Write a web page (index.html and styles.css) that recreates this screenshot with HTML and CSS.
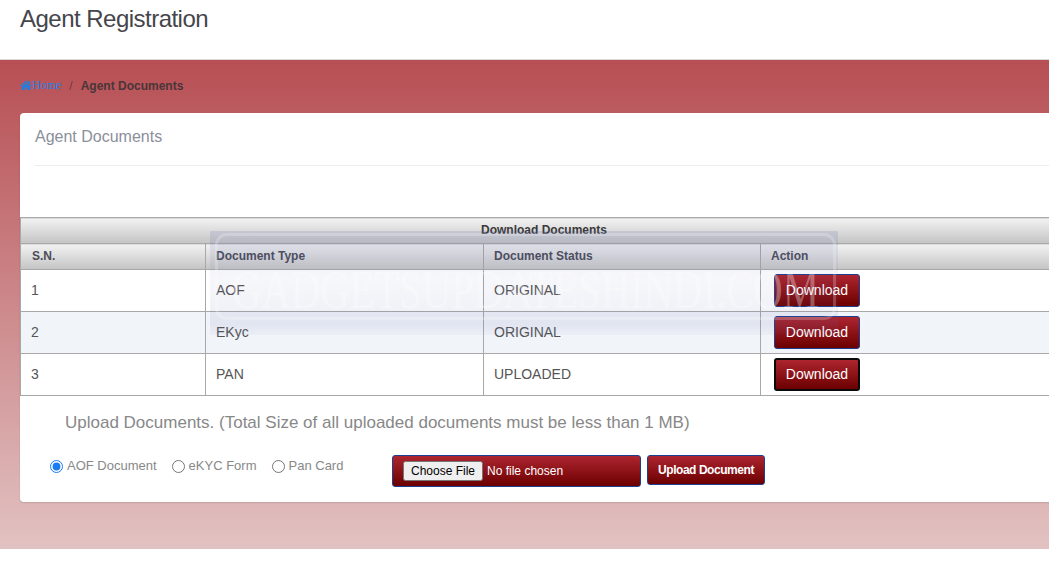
FILE: index.html
```html
<!DOCTYPE html>
<html lang="en">
<head>
<meta charset="utf-8">
<title>Agent Documents</title>
<link rel="stylesheet" href="styles.css">
</head>
<body>
<header class="page-header"><h1>Agent Registration</h1></header>
<main class="content">
  <nav class="crumbs">
    <a class="home" href="#"><svg class="home-icon" viewBox="0 0 24 20" aria-hidden="true"><path d="M12 1 0 11.5l1.4 1.5L12 4l10.600 9 1.400-1.500L20 8V2h-3v3.400z"/><path d="M12 5.800 3.500 13v7H10v-5h4v5h6.500v-7z"/></svg>Home</a>
    <span class="sep">/</span>
    <span class="current">Agent Documents</span>
  </nav>
  <section class="card">
    <h2 class="card-title">Agent Documents</h2>
    <div class="rule"></div>
    <table class="docs">
      <colgroup><col class="c1"><col class="c2"><col class="c3"><col class="c4"></colgroup>
      <thead>
        <tr><th colspan="4" class="caption">Download Documents</th></tr>
        <tr><th>S.N.</th><th>Document Type</th><th>Document Status</th><th>Action</th></tr>
      </thead>
      <tbody>
        <tr><td>1</td><td>AOF</td><td>ORIGINAL</td><td class="act"><button class="btn">Download</button></td></tr>
        <tr class="alt"><td>2</td><td>EKyc</td><td>ORIGINAL</td><td class="act"><button class="btn">Download</button></td></tr>
        <tr><td>3</td><td>PAN</td><td>UPLOADED</td><td class="act"><button class="btn focused">Download</button></td></tr>
      </tbody>
    </table>
    <p class="note">Upload Documents. (Total Size of all uploaded documents must be less than 1 MB)</p>
    <form class="upload">
      <div class="radios">
        <label><input type="radio" name="doc" checked>AOF Document</label>
        <label><input type="radio" name="doc">eKYC Form</label>
        <label><input type="radio" name="doc">Pan Card</label>
      </div>
      <input class="file" type="file">
      <button class="send" type="button">Upload Document</button>
    </form>
  </section>
  <div class="watermark"><div class="frame"><span>GADGETSUPDATESHINDI.COM</span></div></div>
</main>
</body>
</html>
```
FILE: styles.css
```css
* { box-sizing: border-box; }
html, body { margin: 0; height: 567px; overflow: hidden; background: #fff; }
body { font-family: "Liberation Sans", Arial, sans-serif; color: #555; }

.page-header { height: 60px; padding: 5px 20px 0; border-bottom: 1px solid #d8d8d8; }
.page-header h1 { margin: 0; font-size: 24px; line-height: 27px; font-weight: 400; letter-spacing: -0.52px; color: #45454c; }

.content { position: relative; height: 489px; padding: 0 0 0 20px; background: linear-gradient(#b74f54, #e2c2c2); }

.crumbs { height: 53px; padding-top: 18px; font-size: 12px; line-height: 14px; display: flex; align-items: baseline; }
.home { color: #1f7fe0; text-decoration: none; font-family: "Liberation Serif", serif; font-size: 12px; display: inline-flex; align-items: center; }
.home-icon { width: 12px; height: 10px; fill: #1f7fe0; }
.sep { margin: 0 8px 0 8px; color: #6d3a3d; }
.current { font-weight: 700; color: #4a3538; }

.card { width: 1060px; height: 389px; background: #fff; border-radius: 4px 0 0 4px; box-shadow: 0 1px 2px rgba(0,0,0,.12); }
.card-title { margin: 0; padding: 15px 0 0 15px; height: 52px; font-size: 16px; line-height: 18px; font-weight: 400; color: #8b8f9b; }
.rule { margin-left: 15px; border-top: 1px solid #ececec; height: 52px; }

.docs { width: 1060px; table-layout: fixed; border-collapse: collapse; font-size: 14px; color: #555; }
.c1 { width: 185px; }
.c2 { width: 278px; }
.c3 { width: 277px; }
.docs th { height: 26px; padding: 0 10px 2px; text-align: left; font-size: 12px; font-weight: 700; color: #4b4b58; border: 1px solid #a8a8a8; background: linear-gradient(#f2f2f2, #c4c4c4); }
.docs th:first-child { padding-left: 11px; }
.docs th.caption { text-align: center; padding: 0 12px 2px 0; color: #3a3a3a; }
.docs td { height: 42px; padding: 0 10px 2px; border: 1px solid #a8a8a8; }
.docs .alt td { background: #f1f4f9; }
.docs td.act { padding: 0 13px; }

.btn { display: block; width: 86px; height: 33px; padding: 0 0 2px; border: 1px solid #1c3f8f; border-radius: 3px; font: 14px "Liberation Sans", Arial, sans-serif; color: #fff; background: linear-gradient(#ad2530, #6c0000); }
.btn.focused { border: 2px solid #0a0a0a; }

.note { margin: 0; padding: 17px 0 0 45px; height: 59px; font-size: 17px; line-height: 19px; color: #888; }

.upload { display: flex; align-items: flex-start; }
.radios { display: flex; width: 372px; padding: 4px 0 0 30px; font-size: 13px; line-height: 14px; color: #888; }
.radios label { display: flex; align-items: center; margin-right: 15px; }
.radios input { margin: 0 4px 0 0; width: 13px; height: 13px; accent-color: #1a7cf2; }

.file { width: 249px; height: 32px; padding: 5px 10px; border: 1px solid #1c3f8f; border-radius: 3px; font: 12px "Liberation Sans", Arial, sans-serif; color: #fff; background: linear-gradient(#ad2530, #6c0000); }
.send { width: 118px; height: 30px; margin-left: 6px; padding: 0; border: 1px solid #1c3f8f; border-radius: 3px; font: 700 12px "Liberation Sans", Arial, sans-serif; letter-spacing: -0.45px; color: #fff; background: linear-gradient(#ad2530, #6c0000); }

.watermark { position: absolute; left: 210px; top: 171px; width: 628px; height: 104px; padding: 2px 2px 15px 5px; background: linear-gradient(rgba(90,100,170,.17), rgba(90,100,170,.05) 45%, rgba(90,100,170,.1) 90%, rgba(90,100,170,.04)); pointer-events: none; }
.frame { height: 100%; border: 3px solid rgba(255,255,255,.22); border-radius: 12px; display: flex; align-items: center; justify-content: center; overflow: hidden; }
.frame span { display: block; padding-top: 26px; font: 55px/60px "Liberation Serif", serif; white-space: nowrap; color: rgba(255,255,255,.32); transform: scaleX(.74); }
```
